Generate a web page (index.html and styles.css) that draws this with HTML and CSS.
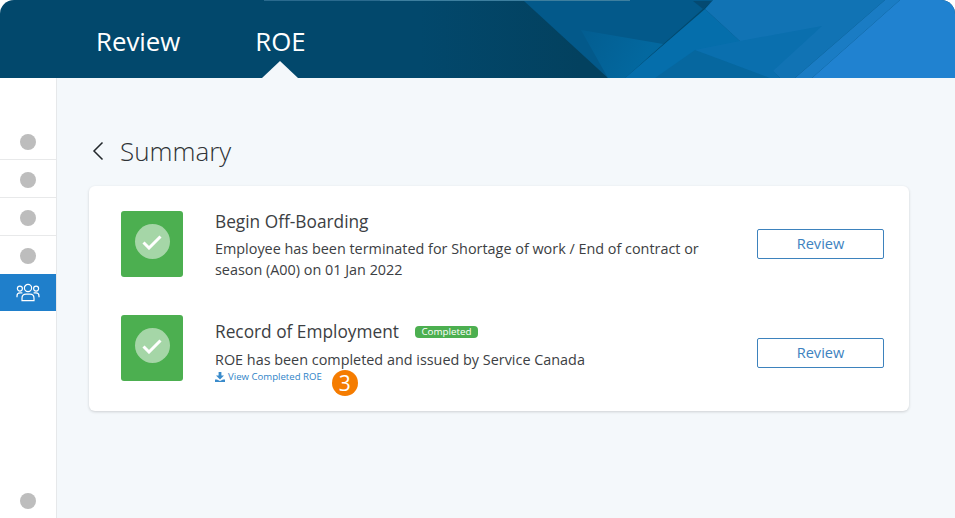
FILE: index.html
```html
<!DOCTYPE html>
<html lang="en">
<head>
<meta charset="utf-8">
<title>ROE Summary</title>
<link rel="stylesheet" href="styles.css">
</head>
<body>
<div class="app">
  <header class="topbar">
    <svg class="topbar-art" viewBox="0 0 955 78" width="955" height="78" aria-hidden="true">
      <defs>
        <linearGradient id="fade" x1="420" y1="0" x2="580" y2="0" gradientUnits="userSpaceOnUse">
          <stop offset="0" stop-color="#02486c"/>
          <stop offset="1" stop-color="#03415f"/>
        </linearGradient>
        <linearGradient id="facet" x1="581" y1="30" x2="640" y2="65" gradientUnits="userSpaceOnUse">
          <stop offset="0" stop-color="#035d90"/>
          <stop offset="1" stop-color="#03689f"/>
        </linearGradient>
      </defs>
      <polygon fill="url(#fade)" points="523,0 608,78 400,78 400,0"/>
      <polygon fill="#03598a" points="523,0 713,0 625,78 608,78"/>
      <polygon fill="url(#facet)" points="581,30 663,44 625,78 608,78"/>
      <polygon fill="#044a72" points="693,1 713,1 703,9"/>
      <polygon fill="#056eab" points="705,9 740,41 780,78 625,78"/>
      <polygon fill="#1173b4" points="713,0 885,0 795,78 780,78 705,9"/>
      <polygon fill="#0a6fae" points="740,41 822,26 773,71 780,78 700,78 695,50"/>
      <polygon fill="#06679f" points="655,78 695,50 722,60 770,78"/>
      <polygon fill="#1a7cc4" points="885,0 900,0 812,78 795,78"/>
      <polygon fill="#2082d0" points="900,0 955,0 955,78 812,78"/>
      <rect x="264" y="0" width="116" height="1" fill="#2a6a8e"/>
      <rect x="380" y="0" width="250" height="1" fill="#3d7f9f"/>
    </svg>
    <nav class="tabs">
      <a class="tab">Review</a>
      <a class="tab tab-active">ROE</a>
    </nav>
  </header>
  <div class="body">
    <aside class="sidebar">
      <div class="side-list">
        <div class="side-item"><span class="dot"></span></div>
        <div class="side-item"><span class="dot"></span></div>
        <div class="side-item"><span class="dot"></span></div>
        <div class="side-item side-item-last"><span class="dot"></span></div>
        <div class="side-active">
          <svg width="24" height="20" viewBox="0 0 24 20" fill="none" stroke="#fff" stroke-width="1.2" aria-hidden="true">
            <circle cx="12" cy="5" r="3.6"/>
            <circle cx="3.9" cy="5.6" r="2.5"/>
            <circle cx="20.1" cy="5.6" r="2.5"/>
            <path d="M6 17.6v-2.4c0-2.3 1.7-4 4-4h4c2.3 0 4 1.7 4 4v2.4z"/>
            <path d="M1 14.3v-1.4c0-1.7 1.2-3 3-3h2.4M23 14.3v-1.4c0-1.7-1.2-3-3-3h-2.4"/>
          </svg>
        </div>
      </div>
      <span class="dot dot-bottom"></span>
    </aside>
    <main class="main">
      <h1 class="page-title">
        <svg class="back" width="12" height="20" viewBox="0 0 12 20" fill="none" stroke="#22272b" stroke-width="1.5" aria-hidden="true"><path d="M10.5 1.5 2 10l8.5 8.5"/></svg>
        Summary
      </h1>
      <section class="card">
        <article class="row row-first">
          <div class="tile"><span class="tile-circle"><svg width="20" height="16" viewBox="0 0 20 16" fill="none" stroke="#fff" stroke-width="3" aria-hidden="true"><path d="M1.5 8.5 7 14 18.5 2.5"/></svg></span></div>
          <div class="text">
            <h2 class="row-title">Begin Off-Boarding</h2>
            <p class="row-desc">Employee has been terminated for Shortage of work / End of contract or season (A00) on 01 Jan 2022</p>
          </div>
          <button class="btn">Review</button>
        </article>
        <article class="row row-second">
          <div class="tile"><span class="tile-circle"><svg width="20" height="16" viewBox="0 0 20 16" fill="none" stroke="#fff" stroke-width="3" aria-hidden="true"><path d="M1.5 8.5 7 14 18.5 2.5"/></svg></span></div>
          <div class="text">
            <div class="title-line"><h2 class="row-title">Record of Employment</h2><span class="badge">Completed</span></div>
            <p class="row-desc">ROE has been completed and issued by Service Canada</p>
            <div class="link-line">
              <a class="link"><svg width="10" height="10" viewBox="0 0 10 10" aria-hidden="true"><path fill="#3a8bcb" d="M3.6 0h2.8v3.6H9L5 7.4 1 3.6h2.6zM0 7.4h2L5 9l3-1.6h2V10H0z"/></svg>View Completed ROE</a>
              <span class="step">3</span>
            </div>
          </div>
          <button class="btn">Review</button>
        </article>
      </section>
    </main>
  </div>
</div>
</body>
</html>
```
FILE: styles.css
```css
* { box-sizing: border-box; }
html, body { margin: 0; height: 100%; background: #fff; }
body { font-family: "Open Sans", "Noto Sans", sans-serif; color: #3c4043; overflow: hidden; }
.app { width: 955px; height: 518px; display: flex; flex-direction: column; }

.topbar { position: relative; height: 78px; flex: none; background: #02486c; border-radius: 14px 14px 0 0; overflow: hidden; }
.topbar-art { position: absolute; inset: 0; }
.tabs { position: relative; display: flex; gap: 75px; padding-left: 96px; height: 100%; }
.tab { position: relative; color: #fff; font-size: 25.8px; line-height: 36px; padding-top: 23px; height: 78px; }
.tab-active::after { content: ""; position: absolute; left: 50%; bottom: 0; margin-left: -18px; width: 0; height: 0; border-left: 18px solid transparent; border-right: 18px solid transparent; border-bottom: 17px solid #f4f8fb; }

.body { flex: 1; display: flex; min-height: 0; }
.sidebar { width: 57px; flex: none; background: #fff; border-right: 1px solid #e6e8ea; box-shadow: 1px 0 2px rgba(0,0,0,.04); display: flex; flex-direction: column; justify-content: space-between; padding: 44px 0 9px; }
.side-list { display: flex; flex-direction: column; }
.side-item { height: 38px; padding-top: 2px; display: flex; align-items: center; justify-content: center; border-bottom: 1px solid #e8e9ea; }
.side-item-last { border-bottom: 0; }
.dot { width: 16px; height: 16px; border-radius: 50%; background: #bdbdbd; display: block; }
.dot-bottom { align-self: center; }
.side-active { height: 37px; background: #1f7fcb; display: flex; align-items: center; justify-content: center; }

.main { flex: 1; background: #f4f8fb; padding: 52px 46px 0 32px; min-width: 0; }
.page-title { margin: 0 0 14px; height: 42px; display: flex; align-items: center; gap: 16px; padding-left: 3px; font-size: 26px; font-weight: 300; color: #2f3336; }
.back { flex: none; }
.card { background: #fff; border-radius: 6px; box-shadow: 0 1px 3px rgba(0,0,0,.16); height: 225px; padding: 0 25px 0 32px; }
.row { display: flex; align-items: flex-start; }
.row-first { padding-top: 25px; height: 129px; }
.row-second { height: 96px; }
.tile { width: 62px; height: 66px; padding-bottom: 5px; flex: none; background: #4caf50; border-radius: 3px; display: flex; align-items: center; justify-content: center; }
.tile-circle { width: 35px; height: 35px; border-radius: 50%; background: #a5d6a7; display: flex; align-items: center; justify-content: center; }
.text { flex: 1; padding-left: 32px; min-width: 0; }
.row-title { margin: 0; font-size: 17.3px; font-weight: 400; line-height: 24px; color: #3c4043; }
.row-first .row-title { margin-top: -1px; }
.row-desc { margin: 0; font-size: 14.4px; line-height: 21px; width: 500px; }
.row-first .row-desc { margin-top: 4px; }
.title-line { display: flex; align-items: center; gap: 16px; margin-top: 5px; }
.row-second .row-desc { margin-top: 5px; }
.badge { background: #4caf50; color: #fff; font-size: 9.8px; line-height: 12px; height: 12px; border-radius: 4px; width: 63px; text-align: center; }
.link-line { display: flex; align-items: flex-start; height: 26px; }
.link { color: #2f84c8; font-size: 9.6px; line-height: 14px; display: flex; align-items: center; gap: 3px; }
.step { width: 26px; height: 26px; border-radius: 50%; background: #f57c00; color: #fff; font-size: 21px; line-height: 26px; font-weight: 500; text-align: center; margin-left: 10px; }
.btn { flex: none; width: 127px; height: 30px; margin-top: 18px; padding: 0 0 2px; background: #fff; border: 1px solid #3d82bd; border-radius: 2px; color: #3d82c0; font: 400 14.6px/1 "Open Sans", sans-serif; }
.row-second .btn { margin-top: 23px; }
```
